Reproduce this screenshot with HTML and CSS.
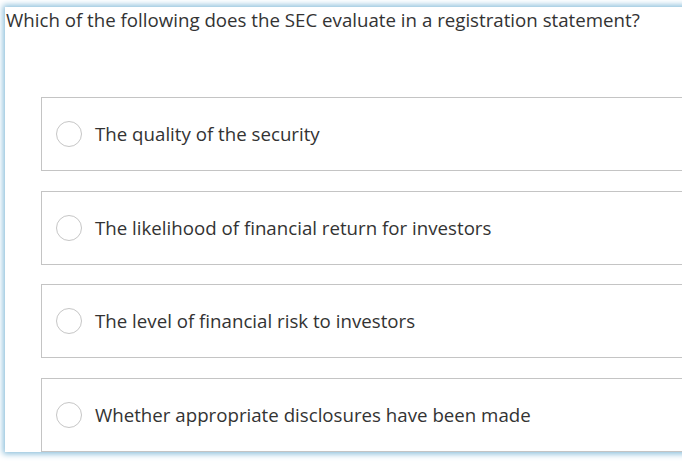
FILE: index.html
```html
<!DOCTYPE html>
<html>
<head>
<meta charset="utf-8">
<link rel="stylesheet" href="styles.css">
</head>
<body>
<div class="panel">
  <p class="question">Which of the following does the SEC evaluate in a registration statement?</p>
  <div class="options">
    <label class="option"><span class="radio"></span><span class="label">The quality of the security</span></label>
    <label class="option"><span class="radio"></span><span class="label">The likelihood of financial return for investors</span></label>
    <label class="option"><span class="radio"></span><span class="label">The level of financial risk to investors</span></label>
    <label class="option"><span class="radio"></span><span class="label">Whether appropriate disclosures have been made</span></label>
  </div>
</div>
</body>
</html>
```
FILE: styles.css
```css
html, body {
  margin: 0;
  padding: 0;
  background: #ffffff;
  overflow: hidden;
  width: 682px;
  height: 467px;
}
body {
  font-family: "Open Sans", "Liberation Sans", sans-serif;
  color: #333333;
}
.panel {
  margin: 7px 0 0 5px;
  width: 720px;
  height: 445px;
  background: #ffffff;
  box-shadow: 0 0 6px 2px #8cbfdb;
  box-sizing: border-box;
}
.question {
  margin: 0;
  padding: 0 0 0 1px;
  font-size: 18.7px;
  line-height: 26px;
}
.options {
  display: flex;
  flex-direction: column;
  gap: 19.67px;
  margin: 64px 0 0 36px;
}
.option {
  display: flex;
  align-items: center;
  height: 74px;
  box-sizing: border-box;
  border: 1px solid #c4c4c4;
  padding-left: 14px;
}
.radio {
  width: 26px;
  height: 26px;
  box-sizing: border-box;
  border: 1px solid #c6c6c6;
  border-radius: 50%;
  flex: none;
  margin-right: 13px;
}
.label {
  font-size: 18.7px;
  line-height: 26px;
}
```
